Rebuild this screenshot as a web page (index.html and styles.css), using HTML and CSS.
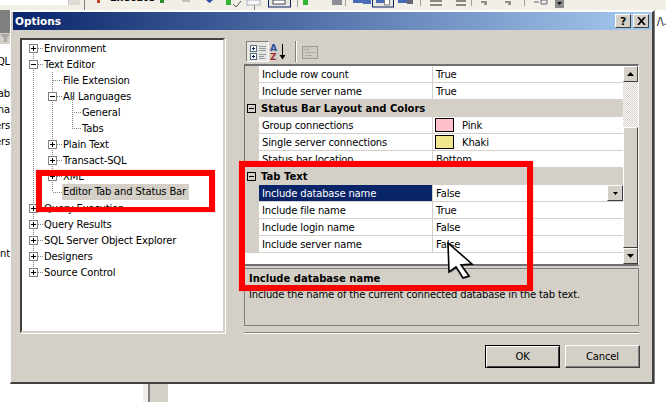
FILE: index.html
```html
<!DOCTYPE html>
<html lang="en">
<head>
<meta charset="utf-8">
<title>Options</title>
<link rel="stylesheet" href="styles.css">
</head>
<body>
<div class="desktop">
  <div class="topstrip">
    <div class="top-white"></div>
    <div class="top-grey"></div>
    <span class="execute">Execute</span>
    <svg class="top-icons" width="666" height="10" viewBox="0 0 666 10">
      <path d="M84.500 0V10M254.500 0V10" stroke="#808080" fill="none"/>
      <rect x="97" y="0" width="3" height="3" fill="#c8402a"/>
      <rect x="160" y="0" width="4" height="3" fill="#2f8f2f"/>
      <rect x="182" y="0" width="8" height="2" fill="#c4c2ba"/>
      <path d="M206 0h7l-3.500 3z" fill="#2a4ea0"/>
      <rect x="226" y="0" width="5" height="5" fill="#35b035"/>
      <path d="M233 4l3 3 5-6" stroke="#555" fill="none"/>
      <rect x="247" y="0" width="13" height="5" fill="#f6f6f6" stroke="#a8b0c0"/>
      <rect x="268.500" y="-2" width="22" height="9" fill="#e8e6dc" stroke="#0a246a"/>
      <rect x="273" y="0" width="12" height="4" fill="#fff" stroke="#445"/>
      <path d="M297.500 0V7" stroke="#a0a0a0"/>
      <rect x="303" y="0" width="5" height="5" fill="#2fb52f"/>
      <rect x="332" y="0" width="10" height="5" fill="#8c8c94"/>
      <path d="M345.500 0V6" stroke="#a0a0a0"/>
      <path d="M353 0h10v3h-10zM363 0h8v4h-8z" fill="#4a6cb8"/>
      <rect x="372.500" y="-2" width="21" height="9" fill="#e8e6dc" stroke="#0a246a"/>
      <path d="M376 0h8v3h-8z" fill="#4a6cb8"/>
      <path d="M384.500 0v5h5V0" stroke="#777" fill="#fff"/>
      <path d="M398 0h9v3h-9z" fill="#4a6cb8"/><path d="M407 0h6v4h-6z" fill="#667"/>
      <path d="M420.500 0V6" stroke="#a0a0a0"/>
      <path d="M430 1h12M430 5h12M456 1h10M456 5h10" stroke="#222"/>
      <path d="M471.500 0V6" stroke="#a0a0a0"/>
      <path d="M481 2h6M484 4h3M505 2h6M508 4h3" stroke="#333"/>
      <path d="M524.500 0V6" stroke="#a0a0a0"/>
      <path d="M534 2h5M541 0h6v4h-6z" stroke="#667" fill="none"/>
      <rect x="555" y="0" width="9" height="8" fill="#8c8c88"/>
      <path d="M557 2h5l-2.500 3z" fill="#111"/>
    </svg>
  </div>

  <div class="work">
    <div class="leftpane">
      <div class="lp-head"></div>
      <div class="lp-funnel">
        <svg width="10" height="10" viewBox="0 0 10 10"><path d="M0 1h10l-3 4v4H4V5z" fill="#a8a8a4"/></svg>
      </div>
      <div class="lp-list">
        <div class="lp-row">QL</div>
        <div class="lp-row"></div>
        <div class="lp-row">ab</div>
        <div class="lp-row">na</div>
        <div class="lp-row">ers</div>
        <div class="lp-row">ers</div>
        <div class="lp-gap"></div>
        <div class="lp-row">nt</div>
      </div>
    </div>
    <div class="rightpane">/\.</div>
  </div>

  <div class="lower"><div class="pillar"></div></div>

  <div class="dialog">
    <div class="titlebar">
      <span class="title">Options</span>
      <div class="title-buttons">
        <button class="cap">?</button>
        <button class="cap cap-x">
          <svg width="9" height="8" viewBox="0 0 9 8"><path d="M1 0l7 8M8 0L1 8" stroke="#000" stroke-width="1.700" fill="none"/></svg>
        </button>
      </div>
    </div>

    <div class="main">
      <div class="tree">
        <svg class="tree-lines" width="200" height="240" viewBox="0 0 200 240">
          <path d="M11.500 8V232M30.500 32V152M50.500 56V88M16 8.500h6M16 24.500h6M16 168.500h6M16 184.500h6M16 200.500h6M16 216.500h6M16 232.500h6M31 40.500h9M35 56.500h5M50 72.500h9M50 88.500h9M35 104.500h5M35 120.500h5M35 136.500h5M31 152.500h9" stroke="#808080" stroke-dasharray="1 1" fill="none"/>
        </svg>
        <div class="tree-row lvl0"><i class="exp plus"></i>Environment</div>
        <div class="tree-row lvl0"><i class="exp"></i>Text Editor</div>
        <div class="tree-row leaf1">File Extension</div>
        <div class="tree-row lvl1"><i class="exp"></i>All Languages</div>
        <div class="tree-row leaf2">General</div>
        <div class="tree-row leaf2">Tabs</div>
        <div class="tree-row lvl1"><i class="exp plus"></i>Plain Text</div>
        <div class="tree-row lvl1"><i class="exp plus"></i>Transact-SQL</div>
        <div class="tree-row lvl1"><i class="exp plus"></i>XML</div>
        <div class="tree-row leaf1"><span class="tree-sel">Editor Tab and Status Bar</span></div>
        <div class="tree-row lvl0"><i class="exp plus"></i>Query Execution</div>
        <div class="tree-row lvl0"><i class="exp plus"></i>Query Results</div>
        <div class="tree-row lvl0"><i class="exp plus"></i>SQL Server Object Explorer</div>
        <div class="tree-row lvl0"><i class="exp plus"></i>Designers</div>
        <div class="tree-row lvl0"><i class="exp plus"></i>Source Control</div>
      </div>

      <div class="pane">
        <div class="pg-toolbar">
          <button class="tool tool-on">
            <svg width="20" height="18" viewBox="0 0 20 18">
              <rect x="2.500" y="2.500" width="6" height="6" fill="#fff" stroke="#5a6a80"/>
              <path d="M4 5.500h3M5.500 4v3" stroke="#0a246a"/>
              <rect x="2.500" y="10.500" width="6" height="6" fill="#fff" stroke="#5a6a80"/>
              <path d="M4 13.500h3M5.500 12v3" stroke="#0a246a"/>
              <path d="M11 3.500h7M11 5.500h7M11 7.500h7M11 11.500h7M11 13.500h5M11 15.500h6" stroke="#9098a0"/>
            </svg>
          </button>
          <div class="tool">
            <svg width="18" height="18" viewBox="0 0 18 18">
              <text class="az az-a" x="1" y="8">A</text>
              <text class="az az-z" x="1" y="17">Z</text>
              <path d="M13.500 1V15" stroke="#000"/>
              <path d="M10.500 12h6l-3 4.500z" fill="#000"/>
            </svg>
          </div>
          <div class="tool-sep"></div>
          <div class="tool">
            <svg width="18" height="16" viewBox="0 0 18 16">
              <rect x="1.500" y="2.500" width="15" height="12" fill="#cfcbc3" stroke="#9c9a92"/>
              <path d="M1.500 5.500h6v-3M4 8.500h10M4 11.500h7" stroke="#aeaca4" fill="none"/>
            </svg>
          </div>
        </div>

        <div class="grid">
          <div class="grid-list">
            <div class="pg-row"><span class="gutter"></span><span class="label">Include row count</span><span class="value">True</span></div>
            <div class="pg-row"><span class="gutter"></span><span class="label">Include server name</span><span class="value">True</span></div>
            <div class="pg-head"><i class="exp exp-dark"></i>Status Bar Layout and Colors</div>
            <div class="pg-row"><span class="gutter"></span><span class="label">Group connections</span><span class="value value-color"><i class="swatch swatch-pink"></i>Pink</span></div>
            <div class="pg-row"><span class="gutter"></span><span class="label">Single server connections</span><span class="value value-color"><i class="swatch swatch-khaki"></i>Khaki</span></div>
            <div class="pg-row"><span class="gutter"></span><span class="label">Status bar location</span><span class="value">Bottom</span></div>
            <div class="pg-head"><i class="exp exp-dark"></i>Tab Text</div>
            <div class="pg-row pg-selected"><span class="gutter"></span><span class="label">Include database name</span><span class="value">False<button class="dropdown"><svg width="5" height="3" viewBox="0 0 5 3"><path d="M0 0h5L2.500 3z" fill="#000"/></svg></button></span></div>
            <div class="pg-row"><span class="gutter"></span><span class="label">Include file name</span><span class="value">True</span></div>
            <div class="pg-row"><span class="gutter"></span><span class="label">Include login name</span><span class="value">False</span></div>
            <div class="pg-row"><span class="gutter"></span><span class="label">Include server name</span><span class="value">False</span></div>
          </div>
          <div class="scrollbar">
            <button class="sb-btn"><svg width="7" height="4" viewBox="0 0 7 4"><path d="M3.500 0L7 4H0z" fill="#000"/></svg></button>
            <div class="sb-track"></div>
            <div class="sb-thumb"></div>
            <button class="sb-btn"><svg width="7" height="4" viewBox="0 0 7 4"><path d="M0 0h7L3.500 4z" fill="#000"/></svg></button>
          </div>
        </div>

        <div class="desc">
          <div class="desc-title">Include database name</div>
          <div class="desc-text">Include the name of the current connected database in the tab text.</div>
        </div>
        <div class="separator"></div>
        <div class="actions">
          <button class="btn btn-default">OK</button>
          <button class="btn">Cancel</button>
        </div>
      </div>
    </div>
  </div>

  <div class="mark mark-tree"></div>
  <div class="mark mark-grid"></div>

  <svg class="cursor" width="30" height="40" viewBox="0 0 30 40">
    <path d="M3 2L27 23 16 24 24 35 18 37 11 26 4 31z" fill="#000" opacity=".25"/>
    <path d="M1 1L25 22 14 23 22 34 16 36 9 25 2 30z" fill="#fff" stroke="#000" stroke-width="1.600" stroke-linejoin="miter"/>
  </svg>
</div>
</body>
</html>
```
FILE: styles.css
```css
* { box-sizing: border-box; }
html, body { margin: 0; padding: 0; }
body {
  font-family: "DejaVu Sans", Tahoma, sans-serif;
  font-size: 10px;
  letter-spacing: -0.16px;
  color: #000;
  background: #fff;
}
button { font: inherit; letter-spacing: inherit; color: inherit; margin: 0; padding: 0; }
i { display: block; font-style: normal; }

.desktop {
  position: relative;
  width: 666px;
  height: 402px;
  overflow: hidden;
  display: flex;
  flex-direction: column;
  background: #fff;
}

/* Background behind the dialog */
.topstrip {
  position: relative;
  flex: 0 0 10px;
  display: flex;
  background: #f1efe6;
  overflow: hidden;
}
.top-white { width: 69px; height: 5px; background: #fff; border-right: 1px solid #c8c6be; }
.top-grey { width: 11px; height: 5px; background: #dedcd4; }
.top-icons { position: absolute; left: 0; top: 0; }
.execute { position: absolute; left: 110px; top: -8px; font-weight: 700; line-height: 12px; letter-spacing: 0; }

.work { flex: 1; display: flex; justify-content: space-between; }
.leftpane { width: 10px; overflow: hidden; display: flex; flex-direction: column; }
.lp-head { height: 23px; background: #808080; flex: none; }
.lp-funnel { height: 11px; flex: none; background: #d4d0c8; }
.lp-list { padding-top: 10px; }
.lp-row {
  height: 16px;
  line-height: 16px;
  display: flex;
  justify-content: flex-end;
  white-space: nowrap;
}
.lp-gap { height: 96px; }
.rightpane {
  width: 12px;
  padding: 6px 0 0 2px;
  font-size: 10px;
  border-left: 1px solid #808080;
  line-height: 12px;
  overflow: hidden;
}
.lower { flex: 0 0 18px; padding-left: 143px; }
.pillar {
  width: 25px;
  height: 100%;
  background: #d4d0c8;
  border-left: 5px solid #efeeea;
  box-shadow: inset 2px 0 0 #808080;
}

/* Dialog window */
.dialog {
  position: absolute;
  left: 10px;
  top: 11px;
  width: 644px;
  height: 373px;
  background: #d4d0c8;
  border-style: solid;
  border-width: 1px 2px 2px 1px;
  border-color: #fff #404040 #404040 #fff;
  padding: 0 1px 0 2px;
}
.titlebar {
  height: 18px;
  display: flex;
  align-items: center;
  justify-content: space-between;
  padding: 0 2px 0 2px;
  background: linear-gradient(90deg, #0a246a, #a6caf0);
  color: #fff;
}
.title { font-weight: 700; font-size: 10.500px; letter-spacing: 0; }
.title-buttons { display: flex; gap: 2px; }
.cap {
  width: 16px;
  height: 14px;
  background: #d4d0c8;
  border: 1px solid;
  border-color: #fff #404040 #404040 #fff;
  color: #000;
  font-weight: 700;
  font-size: 11px;
  line-height: 11px;
  display: flex;
  align-items: center;
  justify-content: center;
}
.main { display: flex; padding: 8px 0 0 7px; gap: 19px; }

/* Tree */
.tree {
  position: relative;
  flex: none;
  width: 205px;
  height: 295px;
  background: #fff;
  border: 2px solid;
  border-color: #404040 #d4d0c8 #d4d0c8 #404040;
  box-shadow: 1px 1px 0 #fff;
}
.tree-lines { position: absolute; left: 0; top: 0; }
.tree-row {
  position: relative;
  height: 16px;
  display: flex;
  align-items: center;
  white-space: nowrap;
}
.lvl0 { padding-left: 7px; }
.lvl1 { padding-left: 26px; }
.leaf1 { padding-left: 41px; }
.leaf2 { padding-left: 60px; }
.tree-sel { background: #d4d0c8; line-height: 16px; padding: 0 3px 0 1px; margin-left: -1px; }
.exp {
  position: relative;
  flex: none;
  width: 9px;
  height: 9px;
  margin-right: 6px;
  background: #fff;
  border: 1px solid #808080;
}
.exp::before {
  content: "";
  position: absolute;
  left: 1px;
  top: 3px;
  width: 5px;
  height: 1px;
  background: #000;
}
.plus::after {
  content: "";
  position: absolute;
  left: 3px;
  top: 1px;
  width: 1px;
  height: 5px;
  background: #000;
}

/* Property grid */
.pane { flex: none; width: 396px; }
.pg-toolbar { height: 26px; padding-top: 3px; display: flex; align-items: flex-start; }
.tool {
  flex: none;
  height: 21px;
  display: flex;
  align-items: center;
  justify-content: center;
  background: none;
  border: 0;
}
.tool-on {
  width: 23px;
  margin-left: 2px;
  border: 1px solid;
  border-color: #808080 #fff #fff #808080;
  background: #e8e6e0;
}
.tool-sep { width: 1px; height: 21px; margin: 0 5px 0 8px; background: #808080; box-shadow: 1px 0 0 #fff; }
.az { font-size: 9px; font-weight: 700; letter-spacing: 0; }
.az-a { fill: #2a4ea0; }
.az-z { fill: #a03030; }

.grid {
  width: 395px;
  height: 202px;
  display: flex;
  border-style: solid;
  border-width: 2px 1px 2px 1px;
  border-color: #707070 #fff #707070 #707070;
}
.grid-list { width: 378px; background: #fff; flex: none; }
.pg-row {
  height: 17px;
  display: flex;
  line-height: 16px;
  white-space: nowrap;
}
.gutter { flex: 0 0 14px; background: #d4d0c8; }
.label {
  flex: 0 0 174px;
  padding: 1px 0 0 3px;
  border-bottom: 1px solid #d4d0c8;
  border-right: 1px solid #d4d0c8;
}
.value {
  position: relative;
  flex: 1;
  padding: 1px 0 0 3px;
  border-bottom: 1px solid #d4d0c8;
}
.value-color { display: flex; align-items: center; padding: 2px 0 0 2px; }
.pg-selected .label { background: #0a246a; color: #fff; }
.pg-head {
  height: 17px;
  display: flex;
  align-items: center;
  background: #d4d0c8;
  padding-left: 2px;
  font-weight: 700;
  letter-spacing: 0;
}
.exp-dark { background: #d4d0c8; border-color: #000; margin-right: 5px; }
.swatch { width: 19px; height: 14px; margin: -2px 8px 0 0; border: 1px solid #000; }
.swatch-pink { background: #ffc0cb; }
.swatch-khaki { background: #f0e68c; }
.dropdown {
  position: absolute;
  right: 0;
  top: 0;
  width: 16px;
  height: 16px;
  display: flex;
  align-items: center;
  justify-content: center;
  background: #d4d0c8;
  border: 1px solid;
  border-color: #fff #404040 #404040 #fff;
}

.scrollbar { flex: 1; display: flex; flex-direction: column; }
.sb-btn {
  flex: none;
  height: 16px;
  display: flex;
  align-items: center;
  justify-content: center;
  background: #d4d0c8;
  border: 1px solid;
  border-color: #fff #404040 #404040 #fff;
}
.sb-track {
  flex: 0 0 45px;
  background-color: #fff;
  background-image: conic-gradient(#d4d0c8 25%, #fff 0 50%, #d4d0c8 0 75%, #fff 0);
  background-size: 2px 2px;
}
.sb-thumb {
  flex: 1;
  background: #d4d0c8;
  border: 1px solid;
  border-color: #fff #404040 #404040 #fff;
}

.desc {
  width: 395px;
  height: 58px;
  margin-top: 2px;
  padding: 2px 4px;
  border: 1px solid #808080;
}
.desc-title { font-weight: 700; line-height: 16px; letter-spacing: 0; }
.desc-text { line-height: 16px; white-space: nowrap; }
.separator {
  width: 395px;
  height: 2px;
  margin-top: 6px;
  background: #808080;
  box-shadow: inset 0 -1px 0 #fff;
}
.actions { display: flex; justify-content: flex-end; gap: 5px; margin-top: 11px; }
.btn {
  width: 75px;
  height: 23px;
  background: #d4d0c8;
  border: 1px solid;
  border-color: #fff #404040 #404040 #fff;
  box-shadow: inset -1px -1px 0 #808080;
}
.btn-default {
  border: 1px solid #000;
  box-shadow: inset 1px 1px 0 #fff, inset -1px -1px 0 #404040;
}

/* Annotations over the screenshot */
.mark { position: absolute; border: 6px solid #f00; box-shadow: 0 0 1px #f66; }
.mark-tree { left: 36px; top: 170px; width: 179px; height: 42px; border-bottom-width: 5px; }
.mark-grid { left: 239px; top: 161px; width: 294px; height: 130px; }
.cursor { position: absolute; left: 447px; top: 242px; }
```
